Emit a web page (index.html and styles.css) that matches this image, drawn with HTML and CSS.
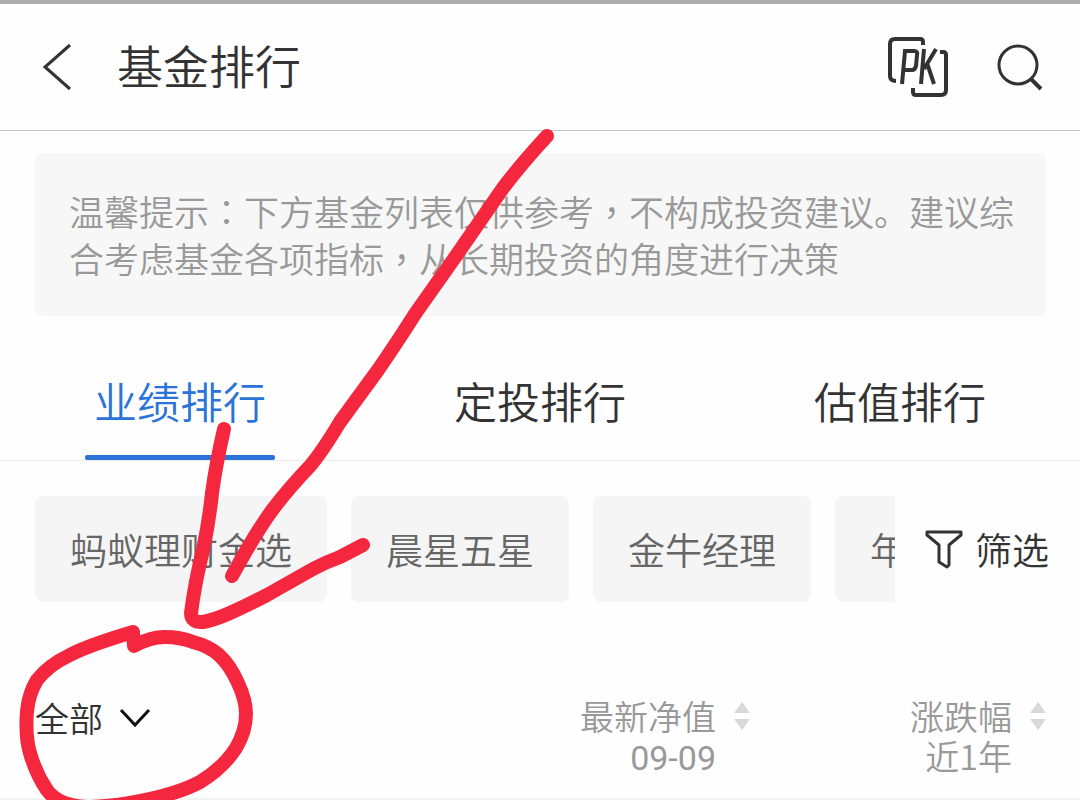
FILE: index.html
```html
<!DOCTYPE html>
<html lang="zh-CN">
<head>
    <meta charset="UTF-8">
    <meta name="viewport" content="width=device-width, initial-scale=1.0">
    <title>基金排行</title>
    <link rel="stylesheet" href="styles.css">
</head>
<body>
    <div class="page">
        <header class="header">
            <button class="icon-btn" type="button" aria-label="返回">
                <svg width="30" height="48" viewBox="0 0 30 48" fill="none" stroke="#333" stroke-width="3">
                    <path d="M28 2 L3 24 L28 46"/>
                </svg>
            </button>
            <h1>基金排行</h1>
            <button class="icon-btn" type="button" aria-label="基金对比">
                <svg width="62" height="62" viewBox="0 0 62 62" fill="none" stroke="#333">
                    <path stroke-width="4" d="M36 9 V6 Q36 3 33 3 H8 Q3 3 3 8 V40 Q3 45 9 45"/>
                    <path stroke-width="4" d="M53 16 H56 Q59 16 59 19 V54 Q59 59 54 59 H29 Q26 59 26 56 V52"/>
                    <path stroke-width="4" d="M15 48 L18 15 H27 Q31 15 30 19 L29 30 Q28 34 25 34 H17"/>
                    <path stroke-width="4" d="M34 48 L37 13 M49 13 L37 33 M40 27 L47 48"/>
                </svg>
            </button>
            <button class="icon-btn" type="button" aria-label="搜索">
                <svg width="46" height="48" viewBox="0 0 46 48" fill="none" stroke="#333" stroke-width="3">
                    <circle cx="21" cy="22" r="19"/>
                    <path stroke-width="4" d="M34 36 L44 46"/>
                </svg>
            </button>
        </header>

        <p class="notice">温馨提示<span class="mid" lang="zh-TW">：</span>下方基金列表仅供参考<span class="mid" lang="zh-TW">，</span>不构成投资建议。建议综合考虑基金各项指标<span class="mid" lang="zh-TW">，</span>从长期投资的角度进行决策</p>

        <nav class="tabs">
            <a class="tab active" href="#performance">业绩排行</a>
            <a class="tab" href="#plan">定投排行</a>
            <a class="tab" href="#valuation">估值排行</a>
        </nav>

        <div class="filters">
            <div class="chips">
                <button class="chip" type="button">蚂蚁理财金选</button>
                <button class="chip" type="button">晨星五星</button>
                <button class="chip" type="button">金牛经理</button>
                <button class="chip" type="button">年</button>
            </div>
            <button class="filter-btn" type="button">
                <svg width="38" height="40" viewBox="0 0 38 40" fill="none" stroke="#333" stroke-width="3" stroke-linejoin="round">
                    <path d="M2 3 H36 V6 L24 16 V36 L22 38 L14 33 V16 L2 6 Z"/>
                </svg>
                筛选
            </button>
        </div>

        <table class="funds">
            <thead>
                <tr>
                    <th class="col-type">
                        <label class="type">
                            <select aria-label="基金类型">
                                <option>全部</option>
                            </select>
                            <svg width="32" height="20" viewBox="0 0 32 20" fill="none" stroke="#111" stroke-width="3">
                                <path d="M2 2 L16 17 L30 2"/>
                            </svg>
                        </label>
                    </th>
                    <th class="col-value">
                        <button class="sort" type="button">
                            <span>最新净值<br><span class="date">09-09</span></span>
                            <svg width="16" height="28" viewBox="0 0 16 28" fill="#d8d8d8">
                                <path d="M8 0 L16 11 H0 Z M0 17 H16 L8 28 Z"/>
                            </svg>
                        </button>
                    </th>
                    <th class="col-change">
                        <button class="sort" type="button">
                            <span>涨跌幅<br>近1年</span>
                            <svg width="16" height="28" viewBox="0 0 16 28" fill="#d8d8d8">
                                <path d="M8 0 L16 11 H0 Z M0 17 H16 L8 28 Z"/>
                            </svg>
                        </button>
                    </th>
                </tr>
            </thead>
        </table>

        <!-- hand drawn arrow and circle -->
        <svg class="marker" viewBox="0 0 1080 800" aria-hidden="true">
            <path d="M547 136 Q522 163 503 188 L458 253 L415 314 Q396 344 378 370 L340 422 Q322 452 310 466 Q289 488 273 509 Q256 532 232 576"/>
            <path d="M224 429 Q216 464 212 493 Q209 522 203 550 Q195 582 191 613 Q191 623 203 622 Q214 620 230 613 Q250 604 267 595 L313 569 Q326 562 340 557 L363 545"/>
            <path d="M134 646 Q150 637 165 637 Q180 637 193 642 Q209 646 219 655 Q230 665 238 683 Q246 700 246 714 Q246 731 236 748 Q223 768 200 782 Q176 795 130 803 C100 808 63 812 47 790 Q36 774 30 753 Q25 736 27 711 Q29 693 37 680 Q49 665 68 656 Q86 646 133 632 Z"/>
        </svg>
    </div>
</body>
</html>
```

FILE: styles.css
```css
* {
    box-sizing: border-box;
}

body {
    margin: 0;
    background: #fefefe;
    color: #333;
    font-family: "Noto Sans CJK SC", sans-serif;
    font-weight: 350;
}

button, select {
    font: inherit;
    color: inherit;
    background: none;
    border: none;
    padding: 0;
    cursor: pointer;
}

svg {
    display: block;
    flex: none;
}

.page {
    position: relative;
    overflow: hidden;
    border-top: 4px solid #aeaeae;
}

.header {
    display: flex;
    align-items: center;
    height: 127px;
    padding: 0 37px 0 42px;
    border-bottom: 1px solid #c4c4c4;
}
.header h1 {
    flex: 1;
    margin: 0 0 6px 45px;
    font-size: 46px;
    line-height: 64px;
    font-weight: 350;
}
.header .icon-btn + .icon-btn {
    margin-left: 48px;
}

.notice {
    margin: 22px 34px 0 35px;
    padding: 34px 28px 35px 34px;
    background: #f7f7f7;
    border-radius: 8px;
    color: #999;
    font-size: 35px;
    line-height: 47px;
}
.notice .mid {
    font-family: "Noto Sans CJK TC", sans-serif;
}

.tabs {
    display: grid;
    grid-template-columns: repeat(3, 1fr);
    margin-top: 28px;
    border-bottom: 1px solid #ececec;
}
.tab {
    justify-self: center;
    width: 190px;
    padding-top: 24px;
    color: #333;
    font-size: 43px;
    line-height: 64px;
    text-align: center;
    text-decoration: none;
}
.tab::after {
    content: "";
    display: block;
    height: 5px;
    margin-top: 23px;
    border-radius: 2px;
}
.tab.active {
    color: #2a74d9;
}
.tab.active::after {
    background: #2a74d9;
}

.filters {
    display: flex;
    align-items: center;
    margin-top: 35px;
    padding: 0 31px 0 35px;
}
.chips {
    display: flex;
    flex: 1;
    gap: 24px;
    overflow: hidden;
}
.chip {
    flex: none;
    height: 106px;
    padding: 0 35px;
    background: #f5f5f5;
    border-radius: 8px;
    color: #666;
    font-size: 37px;
}
.filter-btn {
    display: flex;
    align-items: center;
    gap: 12px;
    margin-left: 30px;
    font-size: 37px;
}

.funds {
    width: 100%;
    margin-top: 94px;
    border-collapse: collapse;
    border-bottom: 2px solid #f2f2f2;
    color: #999;
    font-size: 34px;
    line-height: 40px;
}
.funds th {
    padding: 0 0 20px;
    font-weight: 350;
    text-align: left;
    vertical-align: top;
}
.funds .col-type {
    padding-left: 35px;
}
.funds .col-value {
    width: 36%;
    padding-right: 60px;
}
.funds .col-change {
    width: 25%;
    padding-right: 34px;
}
.type {
    display: inline-flex;
    align-items: center;
    gap: 16px;
    color: #333;
}
.type select {
    appearance: none;
    height: 44px;
}
.sort {
    display: flex;
    gap: 18px;
    margin-left: auto;
    text-align: right;
}
.sort svg {
    margin-top: 6px;
}
.date {
    font-family: Roboto, sans-serif;
    font-weight: 400;
}

.marker {
    position: absolute;
    top: -4px;
    left: 0;
    width: 100%;
    pointer-events: none;
    fill: none;
    stroke: #f5273f;
    stroke-width: 14;
    stroke-linecap: round;
    stroke-linejoin: round;
}
```
